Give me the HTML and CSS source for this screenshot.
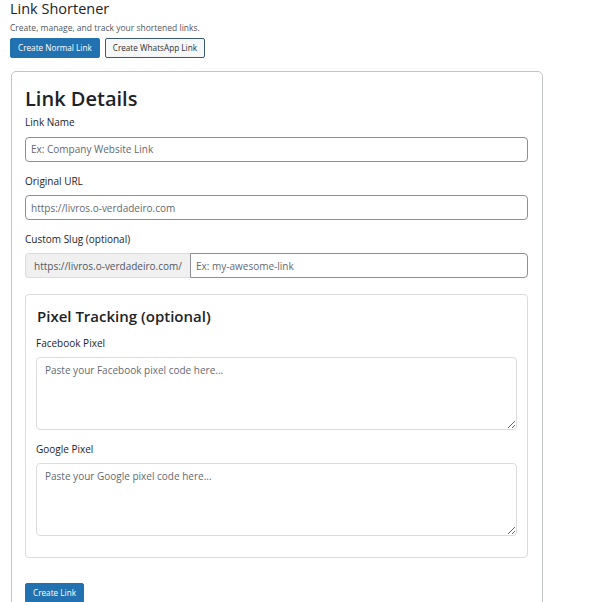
FILE: index.html
```html
<!DOCTYPE html>
<html lang="en">
<head>
    <meta charset="UTF-8">
    <meta name="viewport" content="width=device-width, initial-scale=1.0">
    <title>Link Shortener</title>
    <link rel="stylesheet" href="styles.css">
</head>
<body>
    <h1 class="page-title">Link Shortener</h1>
    <p class="page-desc">Create, manage, and track your shortened links.</p>
    <div class="tabs">
        <button class="btn btn-primary">Create Normal Link</button>
        <button class="btn btn-secondary">Create WhatsApp Link</button>
    </div>

    <div class="card">
        <h2>Link Details</h2>
        <form class="link-form">
            <div class="field">
                <label for="link-name">Link Name</label>
                <input type="text" id="link-name" placeholder="Ex: Company Website Link">
            </div>
            <div class="field">
                <label for="original-url">Original URL</label>
                <input type="url" id="original-url" placeholder="https://livros.o-verdadeiro.com">
            </div>
            <div class="field">
                <label for="slug">Custom Slug (optional)</label>
                <div class="input-group">
                    <span class="prefix">https://livros.o-verdadeiro.com/</span>
                    <input type="text" id="slug" placeholder="Ex: my-awesome-link">
                </div>
            </div>

            <div class="pixel-box">
                <h3>Pixel Tracking (optional)</h3>
                <div class="field">
                    <label for="fb-pixel">Facebook Pixel</label>
                    <textarea id="fb-pixel" placeholder="Paste your Facebook pixel code here..."></textarea>
                </div>
                <div class="field">
                    <label for="google-pixel">Google Pixel</label>
                    <textarea id="google-pixel" placeholder="Paste your Google pixel code here..."></textarea>
                </div>
            </div>

            <div class="actions">
                <button type="submit" class="btn btn-primary">Create Link</button>
            </div>
        </form>
    </div>
</body>
</html>
```

FILE: styles.css
```css
body {
    margin: 0;
    padding: 0 10px;
    font-family: "Open Sans", "Noto Sans", sans-serif;
    color: #1d2327;
    background-color: #fff;
}
.page-title {
    margin: 0;
    padding-top: 1px;
    font-size: 14.5px;
    font-weight: 400;
    line-height: 16px;
}
.page-desc {
    margin: 4px 0 4px;
    font-size: 8.5px;
    line-height: 13px;
    color: #50575e;
}
.tabs {
    display: flex;
    gap: 5px;
}
.btn {
    height: 20px;
    padding: 0 7px;
    border: 1px solid #2271b1;
    border-radius: 2px;
    font-family: inherit;
    font-size: 8.2px;
    line-height: 18px;
    cursor: pointer;
}
.btn-primary {
    background-color: #2271b1;
    color: #fff;
}
.btn-secondary {
    background-color: #f6f7f7;
    color: #2c3338;
    border-color: #3a5a78;
}
.card {
    width: 503px;
    margin-top: 13px;
    margin-left: 1px;
    padding: 13px 14px 30px 13px;
    border: 1px solid #c3c4c7;
    border-radius: 5px;
}
.card h2 {
    margin: 0 0 3px;
    font-size: 20px;
    font-weight: 600;
    line-height: 27px;
}
.link-form {
    display: flex;
    flex-direction: column;
    gap: 12px;
}
.field label {
    display: block;
    margin-bottom: 7px;
    font-size: 10px;
    line-height: 14px;
}
input,
textarea {
    width: 100%;
    box-sizing: border-box;
    font-family: inherit;
    font-size: 10px;
    color: #2c3338;
}
input {
    height: 25px;
    padding: 0 5px;
    border: 1px solid #8c8f94;
    border-radius: 4px;
}
input::placeholder,
textarea::placeholder {
    color: #646970;
}
.input-group {
    display: flex;
}
.prefix {
    display: flex;
    align-items: center;
    height: 25px;
    padding: 0 8px;
    box-sizing: border-box;
    background-color: #f0f0f1;
    border: 1px solid #dcdcde;
    border-right: none;
    border-radius: 4px 0 0 4px;
    font-size: 10px;
    color: #50575e;
    white-space: nowrap;
}
.input-group input {
    flex: 1;
    border-radius: 0 4px 4px 0;
}
.pixel-box {
    margin-top: 4px;
    padding: 11px 10px 21px 11px;
    border: 1px solid #dcdcde;
    border-radius: 4px;
    display: flex;
    flex-direction: column;
    gap: 12px;
}
.pixel-box h3 {
    margin: 0 0 -2px;
    font-size: 15px;
    font-weight: 600;
    line-height: 20px;
}
.pixel-box .field {
    margin-left: -1px;
}
textarea {
    display: block;
    height: 73px;
    padding: 5px 8px;
    border: 1px solid #dcdcde;
    border-radius: 4px;
    resize: vertical;
}
.actions {
    display: flex;
    margin-top: 13px;
}
```
